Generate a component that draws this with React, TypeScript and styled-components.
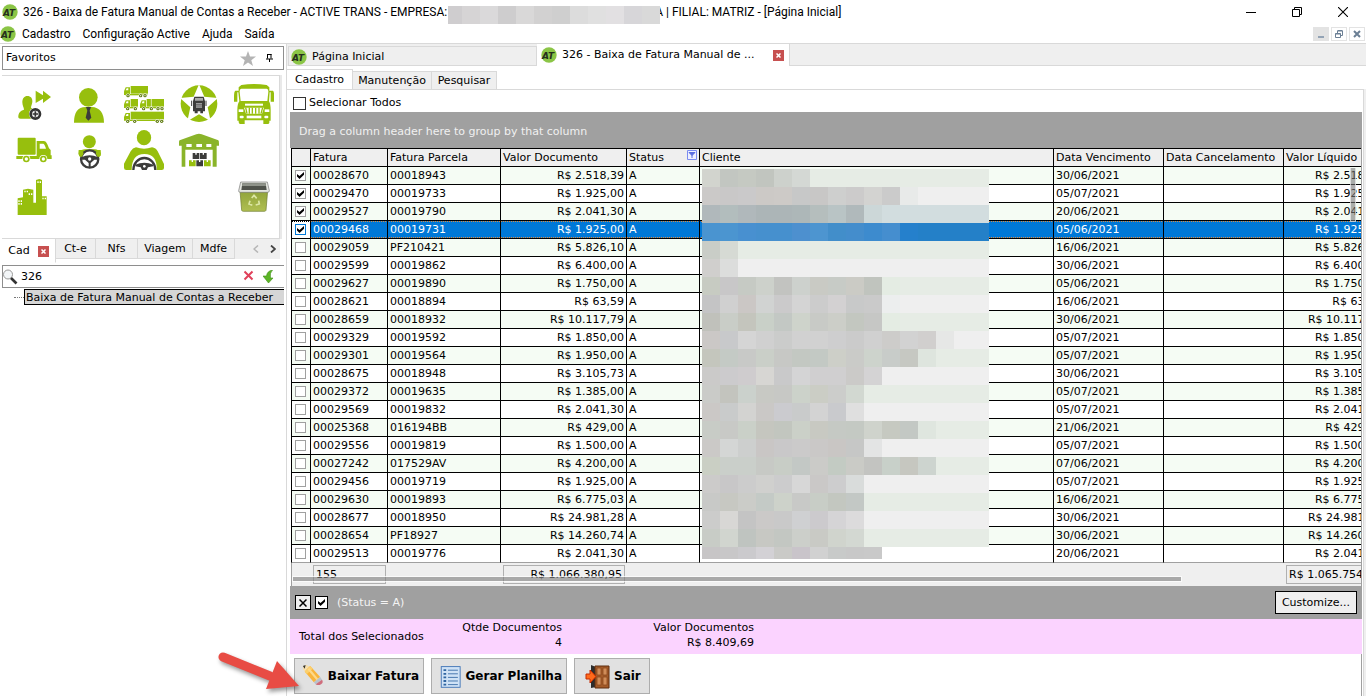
import React from 'react';
import styled, { createGlobalStyle, css } from 'styled-components';

const LINE = '#d9d9d9';
const FACE = '#efefef';
const GRAY = '#a0a0a0';
const GREEN = '#97bf0d';
const DARK = '#3c3c3b';

const GlobalStyle = createGlobalStyle`
  * { box-sizing: border-box; }
  body {
    margin: 0;
    background: #fff;
    color: #000;
    font: 11px/14px "DejaVu Sans", Verdana, sans-serif;
  }
  button, input { font: inherit; color: inherit; margin: 0; }
`;

const Window = styled.div`
  display: flex;
  flex-direction: column;
  min-height: 100vh;
  overflow: hidden;
`;

const PlainButton = styled.button`
  border: 0;
  padding: 0;
  background: none;
`;

/* ---------- title and menu ---------- */

const TitleBar = styled.header`
  display: flex;
  align-items: center;
  height: 24px;
  padding-left: 2px;
  font: 12px/16px Roboto, "Segoe UI", sans-serif;
  white-space: pre;
`;
const TitleText = styled.span`
  margin-left: 5px;
`;
const TitleTail = styled.span`
  margin-left: -5px;
`;
const TitleMask = styled.svg`
  position: relative;
  z-index: 1;
  align-self: flex-end;
  flex: none;
  margin-left: 1px;
`;
const WindowButtons = styled.div`
  display: flex;
  margin-left: auto;
`;
const WindowButton = styled(PlainButton)`
  display: flex;
  justify-content: center;
  align-items: center;
  width: 46px;
  height: 20px;
`;
const MenuBar = styled.nav`
  display: flex;
  align-items: center;
  gap: 12px;
  height: 19px;
  font: 12px/16px Roboto, "Segoe UI", sans-serif;
`;
const MenuLogo = styled.span`
  display: flex;
  margin-right: -6px;
`;
const MdiButtons = styled.div`
  display: flex;
  gap: 2px;
  margin-left: auto;
  padding-right: 1px;
`;
const MdiButton = styled(PlainButton)<{ $flat?: boolean }>`
  display: flex;
  justify-content: center;
  align-items: center;
  width: 16px;
  height: 14px;
  border: 1px solid #e3e3e3;
  background: ${p => (p.$flat ? '#e3e3e3' : '#fff')};
`;

/* ---------- sidebar ---------- */

const Body = styled.div`
  display: flex;
  flex: 1;
  border-top: 1px solid ${LINE};
`;
const Sidebar = styled.aside`
  width: 286px;
  flex: none;
  padding: 2px 2px 0;
`;
const FavHeader = styled.div`
  display: flex;
  align-items: center;
  gap: 10px;
  height: 24px;
  padding: 0 10px 0 3px;
  border: 1px solid #8e8e8e;
`;
const FavTitle = styled.span`
  flex: 1;
`;
const FavGrid = styled.div`
  display: grid;
  grid-template-columns: repeat(5, 40px);
  grid-auto-rows: 40px;
  gap: 6px 15px;
  height: 164px;
  margin: 5px 4px 0 0;
  padding: 8px 0 0 12px;
  border: 1px solid ${LINE};
  border-width: 1px 1px 1px 0;
  box-shadow: 2px 0 0 #e9e9e9;
`;
const FavButton = styled(PlainButton)<{ $column?: number }>`
  display: flex;
  width: 40px;
  height: 40px;
  ${p => p.$column && css`grid-column: ${p.$column};`}
`;
const SideTabs = styled.div`
  display: flex;
  height: 20px;
  margin-right: 4px;
`;
const SideTab = styled(PlainButton)<{ $w: number; $active?: boolean }>`
  display: flex;
  justify-content: center;
  align-items: center;
  gap: 8px;
  width: ${p => p.$w}px;
  height: ${p => (p.$active ? 24 : 20)}px;
  padding-top: 1px;
  border-right: 1px solid ${LINE};
  border-bottom: 1px solid ${p => (p.$active ? '#fff' : LINE)};
  background: ${p => (p.$active ? '#fff' : FACE)};
`;
const TabArrows = styled.div`
  display: flex;
  flex: 1;
  align-items: center;
  justify-content: flex-end;
  gap: 11px;
  padding-right: 4px;
  background: ${FACE};
`;
const CloseBadge = styled.span`
  display: flex;
  justify-content: center;
  align-items: center;
  width: 11px;
  height: 11px;
  background: #c75050;
`;
const SearchBox = styled.label`
  display: flex;
  align-items: center;
  height: 23px;
  margin: 6px 0 0;
  border: solid #8e8e8e;
  border-width: 1px 0 1px 1px;
`;
const SearchInput = styled.input`
  flex: 1;
  min-width: 0;
  border: 0;
  padding: 0 3px;
  outline: 0;
  background: none;
`;
const SearchActions = styled.span`
  display: flex;
  gap: 9px;
  padding-right: 10px;
`;
const Tree = styled.ul`
  list-style: none;
  margin: 1px 0 0;
  padding: 0;
`;
const TreeItem = styled.li`
  display: flex;
  align-items: center;
  padding-left: 12px;
  white-space: nowrap;
  overflow: hidden;
  &::before {
    content: "";
    width: 10px;
    flex: none;
    border-top: 1px dotted #777;
  }
`;
const TreeLink = styled.a`
  flex: 1;
  height: 16px;
  padding: 0 0 0 1px;
  border: 1px solid #000;
  border-right: 0;
  background: #d6d6d6;
  color: #000;
  line-height: 15px;
  text-decoration: none;
`;

/* ---------- documents ---------- */

const Main = styled.main`
  display: flex;
  flex-direction: column;
  flex: 1;
  min-width: 0;
  border-left: 1px solid ${LINE};
`;
const DocTabs = styled.div`
  display: flex;
  height: 22px;
  background: ${FACE};
`;
const DocTab = styled(PlainButton)<{ $active?: boolean }>`
  display: flex;
  align-items: center;
  gap: 5px;
  flex: none;
  text-align: left;
  ${p =>
    p.$active
      ? css`
          width: 253px;
          padding: 0 5px 0 4px;
          border-right: 1px solid ${LINE};
          background: #fff;
        `
      : css`
          width: 249px;
          margin: 2px 0 0 1px;
          padding: 2px 0 0 2px;
          border: 1px solid ${LINE};
          background: ${FACE};
        `}
`;
const DocTabsRest = styled.div`
  flex: 1;
  border-bottom: 1px solid ${LINE};
`;
const DocClose = styled(CloseBadge)`
  margin-left: auto;
`;
const PageTabs = styled.div`
  display: flex;
  align-items: flex-end;
  height: 21px;
  margin: 3px 0 -1px;
`;
const PageTab = styled(PlainButton)<{ $w: number; $active?: boolean }>`
  width: ${p => p.$w}px;
  height: ${p => (p.$active ? 21 : 19)}px;
  border: 1px solid ${LINE};
  border-left-width: 0;
  border-bottom-color: ${p => (p.$active ? '#fff' : LINE)};
  background: ${p => (p.$active ? '#fff' : FACE)};
`;
const Page = styled.section`
  display: flex;
  flex-direction: column;
  flex: 1;
  margin-right: 2px;
  padding: 0 1px 0 3px;
  border-top: 1px solid ${LINE};
  border-right: 1px solid ${LINE};
  box-shadow: 2px 0 0 ${FACE};
`;
const Check = styled.input.attrs({ type: 'checkbox' })<{ $size?: number; $edge?: string }>`
  appearance: none;
  display: grid;
  place-items: center;
  flex: none;
  width: ${p => p.$size ?? 11}px;
  height: ${p => p.$size ?? 11}px;
  border: 1px solid ${p => p.$edge ?? GRAY};
  background: #fff;
  &:checked::after {
    content: "";
    width: 7px;
    height: 7px;
    background: #000;
    clip-path: polygon(0 28%, 36% 58%, 100% 0, 100% 38%, 36% 100%, 0 66%);
  }
`;
const SelectAll = styled.label`
  display: flex;
  align-items: center;
  gap: 3px;
  height: 22px;
  padding: 4px 3px 0;
`;
const GroupBar = styled.div`
  height: 36px;
  padding: 13px 9px 0;
  background: ${GRAY};
  color: #f0f0f0;
`;
const GridFrame = styled.div`
  position: relative;
  margin-left: 1px;
  border-right: 1px solid ${GRAY};
  overflow: hidden;
`;
const Table = styled.table`
  width: calc(100% + 24px);
  table-layout: fixed;
  border-collapse: separate;
  border-spacing: 0;
`;
const Th = styled.th`
  height: 19px;
  padding: 1px 0 0 2px;
  border: solid #000;
  border-width: 1px 1px 1px 0;
  background: ${FACE};
  font-weight: normal;
  line-height: 16px;
  text-align: left;
  white-space: nowrap;
  &:first-child { border-left-width: 1px; }
`;
const HeadCell = styled.span`
  display: flex;
  justify-content: space-between;
  padding-right: 2px;
`;
const Td = styled.td<{ $right?: boolean }>`
  height: 18px;
  padding: 1px 2px 0;
  border: solid #000;
  border-width: 0 1px 1px 0;
  line-height: 16px;
  text-align: ${p => (p.$right ? 'right' : 'left')};
  white-space: nowrap;
  &:first-child { border-left-width: 1px; padding: 0 3px; }
`;
const Tr = styled.tr<{ $selected?: boolean }>`
  background: #fff;
  &:nth-child(odd) { background: #f5fcf4; }
  &:last-child ${Td} { border-bottom-color: ${GRAY}; }
  && {
    ${p =>
      p.$selected &&
      css`
        background: repeating-linear-gradient(90deg, #e08a3c 0 1px, #0078d7 1px 2px) 0 0 / 100% 1px no-repeat,
          repeating-linear-gradient(90deg, #e08a3c 0 1px, #0078d7 1px 2px) 0 16px / 100% 1px no-repeat, #0078d7;
        color: #fff;
        ${Td}:first-child {
          background: #fff;
          outline: 1px dotted #000;
          outline-offset: -1px;
        }
      `}
  }
`;
const ClientMask = styled.svg`
  position: absolute;
  top: 21px;
  left: 411px;
`;
const VThumb = styled.div`
  position: absolute;
  top: 20px;
  right: 5px;
  width: 6px;
  height: 54px;
  border: 1px solid rgba(255, 255, 255, 0.6);
  border-top: 0;
  background: rgba(120, 120, 120, 0.6);
`;
const Summary = styled.div`
  position: relative;
  display: flex;
  height: 23px;
  margin-left: 1px;
  padding: 2px 0 0 21px;
  border-left: 1px solid ${GRAY};
  border-right: 1px solid ${GRAY};
  background: ${FACE};
  overflow: hidden;
`;
const SumBox = styled.div<{ $kind: 'count' | 'total' | 'net' }>`
  height: 19px;
  padding: 1px 2px;
  line-height: 16px;
  border: 1px solid #b0b0b0;
  white-space: nowrap;
  ${p => p.$kind === 'count' && css`width: 73px;`}
  ${p => p.$kind === 'total' && css`width: 122px; margin-left: 117px; text-align: right;`}
  ${p => p.$kind === 'net' && css`width: 100px; margin: 0 -25px 0 auto;`}
`;
const HThumb = styled.div`
  position: absolute;
  top: 13px;
  left: 0;
  right: 179px;
  height: 6px;
  border: 1px solid rgba(255, 255, 255, 0.7);
  background: rgba(130, 130, 130, 0.65);
  background-clip: padding-box;
`;
const FilterBar = styled.div`
  display: flex;
  align-items: center;
  height: 33px;
  padding: 0 5px;
  background: ${GRAY};
  color: #f4f4f4;
`;
const ClearFilter = styled(PlainButton)`
  display: flex;
  justify-content: center;
  align-items: center;
  width: 16px;
  height: 15px;
  margin-right: 4px;
  border: 1px solid #000;
  background: ${FACE};
`;
const FilterText = styled.span`
  flex: 1;
  margin-left: 9px;
`;
const Customize = styled(PlainButton)`
  width: 82px;
  height: 23px;
  border: 1px solid #000;
  background: ${FACE};
  color: #000;
`;
const Totals = styled.div`
  display: flex;
  align-items: center;
  height: 35px;
  padding-left: 9px;
  background: #fbd3ff;
  white-space: nowrap;
`;
const TotalsLabel = styled.span`
  width: 151px;
`;
const TotalsItem = styled.dl<{ $w: number }>`
  width: ${p => p.$w}px;
  margin: 0 0 4px;
  line-height: 15px;
  text-align: right;
  dd { margin: 0; }
`;
const Actions = styled.footer`
  position: relative;
  display: flex;
  flex: 1;
  align-items: flex-start;
  gap: 7px;
  padding: 4px 4px 2px;
  border-right: 1px solid ${GRAY};
`;
const ActionButton = styled.button<{ $w: number }>`
  display: flex;
  align-items: center;
  gap: 4px;
  width: ${p => p.$w}px;
  height: 36px;
  padding: 0 4px 0 7px;
  border: 1px solid #adadad;
  background: #e1e1e1;
  font-weight: bold;
  font-size: 12px;
  white-space: nowrap;
`;
const Pointer = styled.svg`
  position: absolute;
  left: -76px;
  top: -6px;
  overflow: visible;
  pointer-events: none;
  filter: drop-shadow(2px 3px 2px rgba(0, 0, 0, 0.4));
`;

/* ---------- drawings ---------- */

const Logo = () => (
  <svg width="16" height="16" viewBox="0 0 16 16" aria-hidden="true">
    <circle cx="8" cy="8" r="7.7" fill="#8bc546" />
    <text x="1" y="11.5" fontFamily="DejaVu Sans" fontSize="9" fontWeight="bold" fontStyle="italic" fill="#26301c">
      AT
    </text>
  </svg>
);
const CloseX = () => (
  <svg width="5" height="5" viewBox="0 0 5 5">
    <path d="M.5 .5 4.5 4.5M4.5 .5 .5 4.5" stroke="#fff" strokeWidth="1.5" />
  </svg>
);

const Icon = ({ children }: { children: React.ReactNode }) => (
  <svg width="40" height="40" viewBox="0 0 120 120" fill={GREEN}>
    {children}
  </svg>
);

const LongTruck = ({ x, y, w, axles }: { x: number; y: number; w: number; axles: number[] }) => (
  <g transform={`translate(${x} ${y})`}>
    <path d="M0 27V16L5 4H18V27Z" />
    <path d="M5 13 8 7H13V13Z" fill="#fff" />
    <rect x="20" y="0" width={w - 20} height="23" />
    <rect x="4" y="24" width={w - 6} height="4" />
    {axles.map(a => (
      <g key={a}>
        <circle cx={a} cy="29" r="6.5" fill="#fff" />
        <circle cx={a} cy="29" r="5" fill="#5f7a10" />
        <circle cx={a} cy="29" r="1.8" fill="#fff" />
      </g>
    ))}
  </g>
);

const favourites: { name: string; art: React.ReactNode; column?: number }[] = [
  {
    name: 'Novo cliente',
    art: (
      <>
        <path d="M65 20 87 34V20L111 39 87 57V44L65 57Z" />
        <path d="M40 36C50 36 56 43 55 54 54 62 51 67 51 71 54 75 62 76 66 79V104H20C14 104 12 101 13 96 14 86 18 81 30 77 30 70 25 66 25 55 25 43 31 36 40 36Z" />
        <circle cx="64" cy="90" r="19" fill="#fff" />
        <circle cx="64" cy="90" r="14" fill="#f2f2f2" stroke="#333" strokeWidth="8" />
        <path d="M64 82V98M56 90H72" stroke="#333" strokeWidth="5" />
      </>
    ),
  },
  {
    name: 'Funcionário',
    art: (
      <>
        <circle cx="58" cy="40" r="28" />
        <path d="M15 116C15 86 26 69 50 69H68C92 69 105 88 105 116Z" />
        <path d="M51 69H66L62 80 67 101 58 110 50 101 55 80Z" fill={DARK} />
      </>
    ),
  },
  {
    name: 'Frota',
    art: (
      <>
        <LongTruck x={0} y={6} w={72} axles={[12, 50, 63]} />
        <LongTruck x={0} y={45} w={42} axles={[11, 34]} />
        <LongTruck x={48} y={45} w={72} axles={[11, 34, 54, 66]} />
        <path d="M82 44V69" stroke="#fff" strokeWidth="2" />
        <LongTruck x={0} y={83} w={120} axles={[11, 32, 100, 113]} />
      </>
    ),
  },
  {
    name: 'Veículo favorito',
    art: (
      <>
        <circle cx="60" cy="59" r="55" />
        <path d="M60 1 76 38 117 42 86 70 95 112 60 91 25 112 34 70 3 42 44 38Z" fill="#fff" />
        <path d="M46 38H74L78 52V82H72V88H64V82H56V88H47V82H42V52Z" fill={DARK} />
        <path d="M48 42H72V50H48ZM51 57H69V71H51Z" fill="#aaa" />
        <path d="M51 61H69M51 66H69M45 77H52M68 77H75" stroke="#444" strokeWidth="2" />
        <path d="M38 50V66M81 50V66" stroke={DARK} strokeWidth="3" />
      </>
    ),
  },
  {
    name: 'Caminhão',
    art: (
      <>
        <path d="M22 3Q60-3 98 3L106 10V20H117Q121 22 120 40V53H110V25H107L105 52Q110 60 110 78V110H106V116Q106 120 100 120H88V109H32V120H19Q14 120 14 114V110H10V78Q10 60 16 52L13 25H10V53H0V38Q0 22 4 20H14V10Z" />
        <path d="M22 14H98Q104 15 103 24L100 51H20L17 24Q16 15 22 14Z" fill="#fff" />
        <path d="M33 59H87V65H33Z" fill="#fff" />
        <path d="M30 71H90L84 89H36Z" fill="#fff" />
        <path d="M35 71 39 89M46 71V89M55 71V89M65 71V89M75 71V89M86 71 81 89" stroke={GREEN} strokeWidth="4" />
        <rect x="14" y="76" width="14" height="8" fill="#fff" />
        <rect x="92" y="76" width="14" height="8" fill="#fff" />
        <rect x="17" y="95" width="12" height="8" rx="3" fill="#fff" />
        <rect x="91" y="95" width="12" height="8" rx="3" fill="#fff" />
        <rect x="38" y="95" width="44" height="8" fill="#fff" />
      </>
    ),
  },
  {
    name: 'Carga',
    art: (
      <>
        <rect x="11" y="23" width="54" height="51" rx="3" />
        <path d="M68 33H90Q96 33 100 43L105 55 110 60V76H113V87H7V78H68Z" />
        <path d="M77 41H88Q92 42 96 56H77Z" fill="#fff" />
        <circle cx="37" cy="87" r="12" fill="#fff" />
        <circle cx="37" cy="87" r="10" />
        <circle cx="37" cy="87" r="5" fill="#fff" />
        <circle cx="88" cy="87" r="12" fill="#fff" />
        <circle cx="88" cy="87" r="10" />
        <circle cx="88" cy="87" r="5" fill="#fff" />
      </>
    ),
  },
  {
    name: 'Motorista',
    art: (
      <>
        <circle cx="61" cy="35" r="19.5" />
        <path d="M32 64Q34 60 48 58H74Q90 59 91 64L96 76Q88 86 80 80 61 66 44 80 34 86 30 76Z" />
        <circle cx="62" cy="87" r="28" fill="#fff" />
        <path d="M40 59H84L76 64Q62 55 48 64Z" />
        <circle cx="62" cy="87" r="26" fill="none" stroke={DARK} strokeWidth="7" />
        <path d="M37 82Q62 70 87 82V89H76L65 99V112H59V99L48 89H37Z" fill={DARK} />
        <circle cx="62" cy="87" r="5" fill="#fff" />
        <path d="M29 60H39L44 70 39 80H33L28 72ZM95 60H85L80 70 85 80H91L96 72Z" />
      </>
    ),
  },
  {
    name: 'Condutor',
    art: (
      <>
        <ellipse cx="60" cy="23" rx="21.5" ry="23" />
        <path d="M36 52Q60 60 84 52 96 54 101 64L120 102V114Q120 120 113 120H98Q100 72 61 72 23 72 23 120H7Q0 120 0 113V101L20 64Q26 54 36 52Z" />
        <path d="M28 120A33 36 0 1 1 94 120" fill="none" stroke={DARK} strokeWidth="7" />
        <path d="M34 104Q61 92 88 104V109L72 112 68 120H54L50 112 34 109Z" fill={DARK} />
        <circle cx="61" cy="109" r="4" fill="#fff" />
      </>
    ),
  },
  {
    name: 'Armazém',
    art: (
      <>
        <path d="M2 31 52 13Q60 10 68 13L118 31Q120 32 120 42V47H113V110H101V59H19V110H8V47H0V36Q0 32 2 31Z" fill="#8ab42a" />
        <path d="M22 42H38V51H22ZM52 42H69V51H52ZM82 42H97V51H82Z" fill="#fff" />
        <path d="M41 69H61V87H41ZM63 69H83V87H63ZM52 91H72V109H52Z" fill={DARK} />
        <path d="M30 91H50V109H30ZM75 91H95V109H75Z" />
        <path d="M49 68H53V74H49ZM71 68H75V74H71ZM60 90H64V96H60ZM38 90H42V96H38ZM83 90H87V96H83Z" fill="#fff" />
      </>
    ),
  },
  {
    name: 'Empresa',
    column: 1,
    art: (
      <>
        <path d="M11 117V67L27 64V41L42 38 58 41V80H66V12L76 9 84 12V61H98V117Z" />
        <path
          d="M70 16h4v5h-4zM77 16h4v5h-4zM31 44h4v5h-4zM38 44h4v5h-4zM44 52h4v5h-4zM51 52h4v5h-4zM85 65h4v5h-4zM92 65h4v5h-4zM13 73h4v5h-4zM20 73h4v5h-4zM13 81h4v5h-4zM20 81h4v5h-4z"
          fill="#fff"
        />
      </>
    ),
  },
  {
    name: 'Lixeira',
    column: 5,
    art: (
      <>
        <defs>
          <linearGradient id="bin" x1="0" x2="0" y1="0" y2="1">
            <stop offset="0" stopColor="#8fa23a" />
            <stop offset="1" stopColor="#b0bf52" />
          </linearGradient>
        </defs>
        <path d="M18 44H101L96 103Q95 106 91 106H28Q24 106 23 103Z" fill="url(#bin)" stroke="#6d7a2e" strokeWidth="2" />
        <path d="M20 18H100L106 44Q106 49 101 49H19Q13 49 14 44Z" fill="#e4e6e0" stroke="#777" strokeWidth="2" />
        <path d="M25 22H95L98 42H22Z" fill="#50534c" />
        <path d="M25 22H95L96 30H24Z" fill="#8f938a" />
        <g fill="none" stroke="#dce6a4" strokeWidth="5">
          <path d="M53 66 60 58 68 67M74 74 76 84 65 87M55 88 45 84 48 74" />
        </g>
      </>
    ),
  },
];

/* ---------- data ---------- */

type Row = [string, string, string, string];
const rows: Row[] = [
  ['00028670', '00018943', '2.518,39', '30/06/2021'],
  ['00029470', '00019733', '1.925,00', '05/07/2021'],
  ['00029527', '00019790', '2.041,30', '20/06/2021'],
  ['00029468', '00019731', '1.925,00', '05/06/2021'],
  ['00029059', 'PF210421', '5.826,10', '16/06/2021'],
  ['00029599', '00019862', '6.400,00', '30/06/2021'],
  ['00029627', '00019890', '1.750,00', '05/06/2021'],
  ['00028621', '00018894', '63,59', '16/06/2021'],
  ['00028659', '00018932', '10.117,79', '30/06/2021'],
  ['00029329', '00019592', '1.850,00', '05/07/2021'],
  ['00029301', '00019564', '1.950,00', '05/07/2021'],
  ['00028675', '00018948', '3.105,73', '30/06/2021'],
  ['00029372', '00019635', '1.385,00', '05/07/2021'],
  ['00029569', '00019832', '2.041,30', '05/07/2021'],
  ['00025368', '016194BB', '429,00', '21/06/2021'],
  ['00029556', '00019819', '1.500,00', '05/07/2021'],
  ['00027242', '017529AV', '4.200,00', '07/06/2021'],
  ['00029456', '00019719', '1.925,00', '05/07/2021'],
  ['00029630', '00019893', '6.775,03', '16/06/2021'],
  ['00028677', '00018950', '24.981,28', '30/06/2021'],
  ['00028654', 'PF18927', '14.260,74', '30/06/2021'],
  ['00029513', '00019776', '2.041,30', '20/06/2021'],
];

const titleTiles = 'cfcdcf d6d4d5 dad9da cecdce d9d8d8 d2d1d1 cfcfcf dcdcdc e0e0e0 e2e0e2 d7d6d9 d9d9d9'.split(' ');

/* One line per invoice: the tiles over the name, the last colour filling the rest of the line. */
const clientTiles = [
  'd2d4ce c2c6c1 c5c9c2 c1c5bf cdd1cc d4d8d4 e6ece5',
  'cbc9c8 c9c8c8 cac9ca ccc9c6 cdcac7 c7c8c8 c8c7c6 cecfce cccbcb d3d3d1 cbcbcb e8eae9 efefef',
  'b0b8bb b2bdbd b0b8bb acb5b7 acb5b7 adb7b8 b5bebd b9c4c5 b0b9bb ccd7d8 d2dddf',
  '4a94d0 4b95d0 4890d0 4690ce 4690ce 4d90cf 4d95d0 428eca 448dcc 3d8bce 458ecf 2580cc 2480c8',
  'c9cdc7 d6dad4 e6ece5',
  'd0cfcd dcdddc efefef',
  'c7cbc2 c8c7c8 c6cac4 cdd1cb c2c3c0 cdd1cd c9cac4 c7cbc6 cbcbc5 c0c4be e4ece3 e6ece5',
  'c4c4c5 d0d0d0 cbc7c5 d1d3d2 cbcacb d4d4d4 cccccc d3d1d2 c8c9c9 cacaca eceeee efefef',
  'c0c1bb c9cdc7 c4c5bd c9d0c8 c3c8c4 ced3cb c8cac6 cccec8 c3c7c0 c6c7c5 e4ece3 e6ece5',
  'cbc8c6 c8c9cb d5d5d5 d0d0d0 cbcccb d1d1d1 d1d1d1 cececf cbcbcb d0d0d0 cdccca d2d2d2 d1cfce e6e7e6 efefef',
  'c4c6bd c4cac5 c8c9c7 cacfc8 c7c8c5 c3c8c2 c3c9c4 cdcfc8 cacbc8 cdd3cc c8ccc9 c6c8c2 dee5de e6ece5',
  'cbcac9 cccbcd cfccce d7d6d3 c9c9ca d4d4d5 d0cfd0 d0cfd0 cbcac8 d4d3d4 efefef',
  'cacbc8 c3c4be cbd1cc c8c9c4 c7c8c5 ccd2ca cbcdc5 cccdcb d2d8d1 e6ece5',
  'cbc8c6 c9cbcb d3d3d1 cac8c6 cbcbcf c9cbcb d3d3d3 c9cacd dfdfdf efefef',
  'c8ccc6 c8c9c6 cad0c8 c5c6bf c2c6bf cbd0c8 c8c9c2 c5c9c4 c4c9c3 cfd3cc c6c9c1 c3c8c4 dfe6df e6ece5',
  'cbc9c7 d4d6d5 cdcfce c9c6c5 c9c8c9 cbcaca cac8c7 c9c6c4 c6c7c6 e3e4e4 efefef',
  'cacfc4 cacfca cacfca c7c9c5 c8cdc6 c3c8c5 cbcbc8 c3cbc3 cacbc6 c3c4c1 c8d0c9 c6c7c0 cdd4cf e6ece5',
  'cccbca c8c7c8 cccccc d0d0ce cccccd d7d7d7 cac8c7 cdcdce d9dcdb efefef',
  'c8c9c7 c7c8c2 cbccc8 c4cac6 cdd2ca c8c9c7 c8cdc6 c3c7c0 c3c8c5 e6ece5',
  'cccccb d8d7d5 c4c4c4 cbc9c8 c9c9c9 cfd0d2 cccacd d5d4d6 dcdbdc efefef',
  'c8ccc6 d1d5cf bfc4c0 c7c8c3 c3c7c2 cccfca c9cac5 d0d4cd d3d8d2 e6ece5',
  'c7c5c6 c8c7c8 cbcacd d3d1d5 cacac7 c9c4ca d1d1d1 c8cac9 c8c8c8 c9c9c9',
].map(line => line.split(' '));

const columns = [20, 77, 113, 126, 73, undefined, 110, 120, 101];

export default function App() {
  return (
    <Window>
      <GlobalStyle />
      <TitleBar>
        <Logo />
        <TitleText>326 - Baixa de Fatura Manual de Contas a Receber - ACTIVE TRANS - EMPRESA:</TitleText>
        <TitleMask width="212" height="18" shapeRendering="crispEdges">
          {titleTiles.map((c, i) => (
            <rect key={i} x={i * 18 - 4} width="18" height="18" fill={`#${c}`} />
          ))}
        </TitleMask>
        <TitleTail>A | FILIAL: MATRIZ - [Página Inicial]</TitleTail>
        <WindowButtons>
          <WindowButton aria-label="Minimizar">
            <svg width="10" height="10"><path d="M0 5.5H10" stroke="#000" /></svg>
          </WindowButton>
          <WindowButton aria-label="Restaurar">
            <svg width="10" height="10" fill="none" stroke="#000"><path d="M.5 2.5H7.5V9.5H.5ZM2.5 2.5V.5H9.5V7.5H7.5" /></svg>
          </WindowButton>
          <WindowButton aria-label="Fechar">
            <svg width="10" height="10"><path d="M0 0 10 10M10 0 0 10" stroke="#000" strokeWidth="1.1" /></svg>
          </WindowButton>
        </WindowButtons>
      </TitleBar>
      <MenuBar>
        <MenuLogo><Logo /></MenuLogo>
        <PlainButton>Cadastro</PlainButton>
        <PlainButton>Configuração Active</PlainButton>
        <PlainButton>Ajuda</PlainButton>
        <PlainButton>Saída</PlainButton>
        <MdiButtons>
          <MdiButton $flat aria-label="Minimizar página">
            <svg width="8" height="8"><path d="M1 7H7" stroke="#93a3b5" strokeWidth="2" /></svg>
          </MdiButton>
          <MdiButton aria-label="Restaurar página">
            <svg width="8" height="8" fill="none" stroke="#6b7f94"><path d="M.5 3.5H5.5V7.5H.5ZM2.5 3V1H7.5V5.5H6M.5 4H5.5M2.5 .5H7.5" /></svg>
          </MdiButton>
          <MdiButton aria-label="Fechar página">
            <svg width="8" height="8"><path d="M1 1 7 7M7 1 1 7" stroke="#6b7f94" strokeWidth="2" /></svg>
          </MdiButton>
        </MdiButtons>
      </MenuBar>

      <Body>
        <Sidebar>
          <FavHeader>
            <FavTitle>Favoritos</FavTitle>
            <svg width="16" height="15" viewBox="0 0 16 15"><path d="M8 0 10 5.4 16 5.6 11.3 9.2 13 15 8 11.6 3 15 4.7 9.2 0 5.6 6 5.4Z" fill="#b4b4b4" /></svg>
            <svg width="7" height="8" viewBox="0 0 7 8"><path d="M1.5 0V4.5M1.5 .5H5.5M5 0V4.5M0 5H7M3.5 5V8" stroke="#000" fill="none" /></svg>
          </FavHeader>
          <FavGrid>
            {favourites.map(f => (
              <FavButton key={f.name} $column={f.column} aria-label={f.name}>
                <Icon>{f.art}</Icon>
              </FavButton>
            ))}
          </FavGrid>
          <SideTabs>
            <SideTab $w={54} $active>Cad<CloseBadge><CloseX /></CloseBadge></SideTab>
            <SideTab $w={40}>Ct-e</SideTab>
            <SideTab $w={42}>Nfs</SideTab>
            <SideTab $w={55}>Viagem</SideTab>
            <SideTab $w={42}>Mdfe</SideTab>
            <TabArrows>
              <svg width="6" height="8" fill="none"><path d="M5 .5 1 4 5 7.5" stroke="#b5b5b5" strokeWidth="1.5" /></svg>
              <svg width="6" height="8" fill="none"><path d="M1 .5 5 4 1 7.5" stroke="#444" strokeWidth="1.8" /></svg>
            </TabArrows>
          </SideTabs>
          <SearchBox>
            <svg width="15" height="16" viewBox="0 0 15 16">
              <circle cx="5" cy="5.5" r="4.5" fill="#f3f6f8" stroke="#999" />
              <path d="M8 9 13.5 14.5" stroke="#333" strokeWidth="2.6" />
            </svg>
            <SearchInput defaultValue="326" aria-label="Pesquisar rotina" />
            <SearchActions>
              <svg width="11" height="11"><path d="M1.5 1.5 9.5 9.5M9.5 1.5 1.5 9.5" stroke="#e0405a" strokeWidth="2" /></svg>
              <svg width="11" height="13" viewBox="0 0 11 13"><path d="M9.500 0Q4 1 3.500 6H0L5.500 13 10 8H7.500Q6.500 3 9.500 0Z" fill="#5cb526" stroke="#3e8f17" strokeWidth=".6" /></svg>
            </SearchActions>
          </SearchBox>
          <Tree>
            <TreeItem><TreeLink href="#baixa">Baixa de Fatura Manual de Contas a Receber</TreeLink></TreeItem>
          </Tree>
        </Sidebar>

        <Main>
          <DocTabs>
            <DocTab><Logo />Página Inicial</DocTab>
            <DocTab $active>
              <Logo />326 - Baixa de Fatura Manual de ...
              <DocClose><CloseX /></DocClose>
            </DocTab>
            <DocTabsRest />
          </DocTabs>
          <PageTabs>
            <PageTab $w={66} $active>Cadastro</PageTab>
            <PageTab $w={79}>Manutenção</PageTab>
            <PageTab $w={65}>Pesquisar</PageTab>
          </PageTabs>
          <Page>
            <SelectAll><Check $size={13} $edge="#333" />Selecionar Todos</SelectAll>
            <GroupBar>Drag a column header here to group by that column</GroupBar>
            <GridFrame>
              <Table>
                <colgroup>
                  {columns.map((w, i) => <col key={i} width={w} />)}
                </colgroup>
                <thead>
                  <tr>
                    <Th />
                    <Th>Fatura</Th>
                    <Th>Fatura Parcela</Th>
                    <Th>Valor Documento</Th>
                    <Th>
                      <HeadCell>
                        Status
                        <svg width="10" height="10" viewBox="0 0 10 10"><path d="M.5 .5H9.5V9.5H.5Z" fill="#eef0ff" stroke="#7b8cf0" /><path d="M2 2.5H8L5 5.5ZM5 5V8" fill="#5a6ee0" stroke="#5a6ee0" /></svg>
                      </HeadCell>
                    </Th>
                    <Th>Cliente</Th>
                    <Th>Data Vencimento</Th>
                    <Th>Data Cancelamento</Th>
                    <Th>Valor Líquido</Th>
                  </tr>
                </thead>
                <tbody>
                  {rows.map(([invoice, part, value, due], i) => (
                    <Tr key={invoice} $selected={i === 3}>
                      <Td><Check defaultChecked={i < 4} $edge={i === 3 ? '#0078d7' : undefined} aria-label={`Selecionar ${invoice}`} /></Td>
                      <Td>{invoice}</Td>
                      <Td>{part}</Td>
                      <Td $right>R$ {value}</Td>
                      <Td>A</Td>
                      <Td />
                      <Td>{due}</Td>
                      <Td />
                      <Td $right>R$ {value}</Td>
                    </Tr>
                  ))}
                </tbody>
              </Table>
              <ClientMask width="287" height="390" shapeRendering="crispEdges">
                {clientTiles.map((line, y) =>
                  line.map((c, x) => (
                    <rect
                      key={`${x}-${y}`}
                      x={x * 18}
                      y={y * 18}
                      width={x === line.length - 1 && y < 21 ? 288 : 18}
                      height="18"
                      fill={`#${c}`}
                    />
                  )),
                )}
              </ClientMask>
              <VThumb />
            </GridFrame>
            <Summary>
              <SumBox $kind="count">155</SumBox>
              <SumBox $kind="total">R$ 1.066.380,95</SumBox>
              <SumBox $kind="net">R$ 1.065.754,95</SumBox>
              <HThumb />
            </Summary>
            <FilterBar>
              <ClearFilter aria-label="Limpar filtro">
                <svg width="8" height="8"><path d="M.5 .5 7.5 7.5M7.5 .5 .5 7.5" stroke="#000" strokeWidth="1.5" /></svg>
              </ClearFilter>
              <Check $size={13} $edge="#000" defaultChecked aria-label="Filtro ativo" />
              <FilterText>(Status = A)</FilterText>
              <Customize>Customize...</Customize>
            </FilterBar>
            <Totals>
              <TotalsLabel>Total dos Selecionados</TotalsLabel>
              <TotalsItem $w={112}><dt>Qtde Documentos</dt><dd>4</dd></TotalsItem>
              <TotalsItem $w={192}><dt>Valor Documentos</dt><dd>R$ 8.409,69</dd></TotalsItem>
            </Totals>
            <Actions>
              <ActionButton $w={130}>
                <svg width="24" height="26" viewBox="0 0 24 26">
                  <path d="M1 2 5 1 9 3 4 8 1 6Z" fill="#f6dfae" />
                  <path d="M1 2 4 1 3 5Z" fill="#333" />
                  <path d="M9 2 20 14 13 20 3 8Z" fill="#f9b43a" />
                  <path d="M9 2 12 5 5 11 3 8Z" fill="#fbcf6c" />
                  <path d="M7 5 17 17" stroke="#fdd98a" strokeWidth="2.5" />
                  <path d="M20 14 22 17 15 22 13 20Z" fill="#b9c2cc" />
                  <path d="M22 17Q24 20 21 22 18 24 15 22Z" fill="#cf6d7c" />
                </svg>
                Baixar Fatura
              </ActionButton>
              <ActionButton $w={136}>
                <svg width="24" height="25" viewBox="0 0 25 25">
                  <rect x="2.5" y="1.5" width="21" height="23" fill="#cfe2f6" stroke="#3f73b5" />
                  <path d="M10 5.5H21M10 9.5H21M10 13.5H21M10 17.5H21M10 21.5H21" stroke="#3b6ea8" />
                  <path d="M5 5.5H8M5 9.5H8M5 13.5H8M5 17.5H8M5 21.5H8" stroke="#2f64a0" strokeWidth="2" />
                </svg>
                Gerar Planilha
              </ActionButton>
              <ActionButton $w={76}>
                <svg width="28" height="25" viewBox="0 0 28 25">
                  <path d="M9 1 14 3V23L9 24Z" fill="#2d2d2d" />
                  <path d="M13 2H27V24H13Z" fill="#a35a28" stroke="#5f2f10" />
                  <path d="M15 4H19V11H15ZM21 4H25V11H21ZM15 13H19V21H15ZM21 13H25V21H21Z" fill="#d08c58" stroke="#8a4a1e" strokeWidth=".8" />
                  <path d="M4 10H8V6L14 12.5 8 19V15H4Z" fill="#ff6a1a" stroke="#c52b00" />
                </svg>
                Sair
              </ActionButton>
              <Pointer width="86" height="48" viewBox="0 0 86 48">
                <path d="M9 9 56 28" stroke="#e84c44" strokeWidth="9" strokeLinecap="round" />
                <path d="M63 13 85 38 52 41Z" fill="#e84c44" />
              </Pointer>
            </Actions>
          </Page>
        </Main>
      </Body>
    </Window>
  );
}
